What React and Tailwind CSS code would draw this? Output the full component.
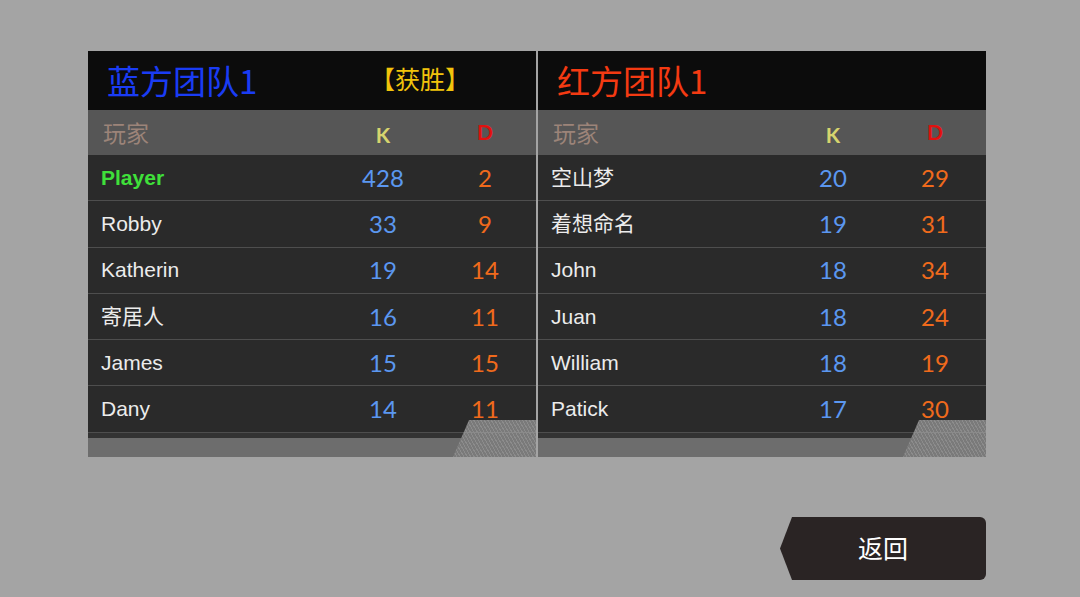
import React from 'react';

const blue = [
  { name: 'Player', k: 428, d: 2, me: true },
  { name: 'Robby', k: 33, d: 9 },
  { name: 'Katherin', k: 19, d: 14 },
  { name: '寄居人', k: 16, d: 11 },
  { name: 'James', k: 15, d: 15 },
  { name: 'Dany', k: 14, d: 11 },
];

const red = [
  { name: '空山梦', k: 20, d: 29 },
  { name: '着想命名', k: 19, d: 31 },
  { name: 'John', k: 18, d: 34 },
  { name: 'Juan', k: 18, d: 24 },
  { name: 'William', k: 18, d: 19 },
  { name: 'Patick', k: 17, d: 30 },
];

const cjk = { fontFamily: '"Noto Sans CJK SC", "Noto Sans", sans-serif' };
const latin = { fontFamily: '"Liberation Sans", "Noto Sans CJK SC", sans-serif' };
const num = { fontFamily: '"Lato", "Noto Sans", sans-serif' };

function Panel({ title, titleClass, badge, rows }) {
  return (
    <div className="relative w-[448px] h-[406px] flex flex-col bg-[#2b2b2b]">
      {/* hatched corner, sits under the last row's numbers */}
      <div
        className="absolute right-0 bottom-0 w-[83px] h-[37px] bg-[repeating-linear-gradient(60deg,#8c8c8c_0px,#8c8c8c_1px,#7a7a7a_1px,#7a7a7a_3px)] z-10"
        style={{ clipPath: 'polygon(16px 0, 100% 0, 100% 100%, 0 100%)' }}
      />
      <div className="absolute right-0 bottom-[24px] w-[72px] h-[1px] bg-[#8a8a8a] z-10" />
      {/* header */}
      <div className="h-[59px] bg-[#0c0c0c] flex items-center pl-[19px] relative">
        <span className={`text-[33px] leading-none ${titleClass}`} style={cjk}>{title}</span>
        {badge && (
          <span className="absolute left-[282px] top-[15px] text-[25px] leading-none text-[#f2c40c]" style={cjk}>
            {badge}
          </span>
        )}
      </div>
      {/* column header */}
      <div className="h-[45px] bg-[#565656] flex items-center">
        <span className="pl-[15px] w-[275px] text-[23px] text-[#9c8479]" style={cjk}>玩家</span>
        <span className="w-[40px] text-center text-[21px] font-bold text-[#d6d46e] mt-[4px]" style={num}>K</span>
        <span className="w-[62px]" />
        <span className="w-[40px] text-center text-[21px] font-bold text-[#e2100e] -mt-[2px]" style={num}>D</span>
      </div>
      {/* rows */}
      <div className="flex flex-col">
        {rows.map((r, i) => (
          <div key={i} className="h-[46.3px] flex items-center border-b border-[#4e4e4e] bg-[#2a2a2a]">
            <span
              className={`pl-[13px] w-[255px] text-[21px] ${r.me ? 'text-[#3fe03a] font-bold' : 'text-[#ececec]'}`}
              style={latin}
            >
              {r.name}
            </span>
            <span className="w-[80px] text-center text-[24px] text-[#5b97f0]" style={num}>{r.k}</span>
            <span className="w-[22px]" />
            <span className="relative z-20 w-[80px] text-center text-[24px] text-[#f06a1c]" style={num}>{r.d}</span>
          </div>
        ))}
      </div>
      {/* bottom strip */}
      <div className="flex-1 flex flex-col">
        <div className="h-[5px] bg-[#333]" />
        <div className="flex-1 bg-[#6d6d6d]" />
      </div>
    </div>
  );
}

export default function App() {
  return (
    <div className="w-[1080px] h-[597px] bg-[#a4a4a4] overflow-hidden">
      <div className="pt-[51px] pl-[88px] flex gap-[2px]">
        <Panel title="蓝方团队1" titleClass="text-[#1a3cf5]" badge="【获胜】" rows={blue} />
        <Panel title="红方团队1" titleClass="text-[#f43a12]" rows={red} />
      </div>
      <div className="flex justify-end pr-[94px] mt-[60px]">
        <button
          className="w-[206px] h-[63px] bg-[#2a2424] text-white text-[25px] leading-none rounded-r-[6px] flex items-center justify-center pb-[3px]"
          style={{ ...cjk, clipPath: 'polygon(12px 0, 100% 0, 100% 100%, 12px 100%, 0 50%)' }}
        >
          返回
        </button>
      </div>
    </div>
  );
}
